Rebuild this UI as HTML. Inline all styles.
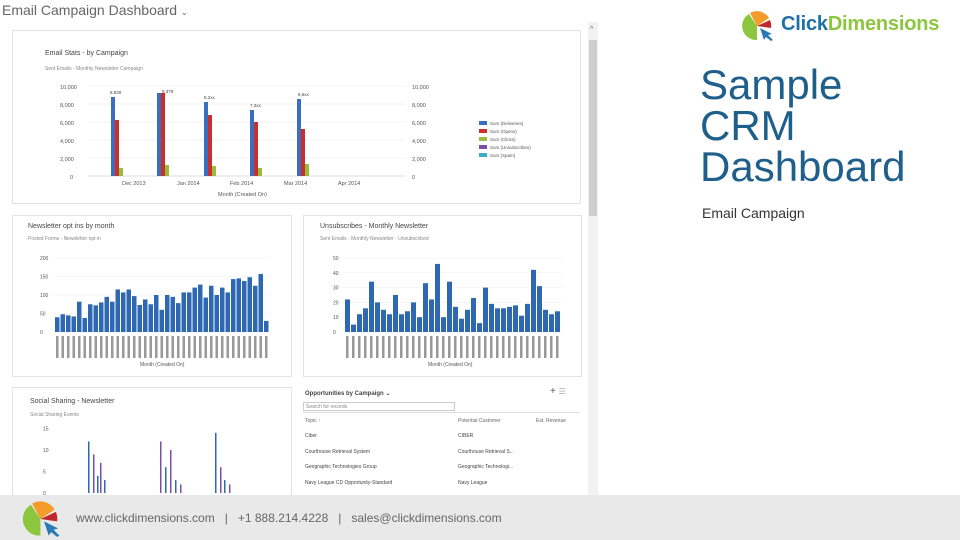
<!DOCTYPE html>
<html><head><meta charset="utf-8"><style>
body{margin:0;width:960px;height:540px;background:#fff;position:relative;overflow:hidden;font-family:"Liberation Sans",sans-serif}
.a{position:absolute}
.p{position:absolute;border:1px solid #e3e3e3;background:#fff}
.t{font-size:7px;color:#444}
.s{font-size:5px;color:#888}
</style></head><body>
<div class="a" style="left:2px;top:2px;font-size:14px;color:#666">Email Campaign Dashboard <span style="font-size:8px">⌄</span></div>
<div class="a" style="left:588px;top:22px;width:10px;height:473px;background:#f2f2f2"></div>
<div class="a" style="left:589px;top:40px;width:8px;height:176px;background:#cfcfcf"></div>
<div class="a" style="left:590px;top:26px;font-size:7px;color:#666">^</div>

<div class="p" style="left:12px;top:30px;width:567px;height:172px"></div>
<div class="a t" style="left:45px;top:50px">Email Stats - by Campaign</div>
<div class="a s" style="left:45px;top:66px">Sent Emails - Monthly Newsletter Campaign</div>
<svg class="a" style="left:0;top:0" width="600" height="540">
<g font-size="5.5" fill="#555" font-family="Liberation Sans">
<text x="60" y="89">10,000</text><text x="60" y="107">8,000</text><text x="60" y="125">6,000</text><text x="60" y="143">4,000</text><text x="60" y="161">2,000</text><text x="70" y="179">0</text>
<text x="412" y="89">10,000</text><text x="412" y="107">8,000</text><text x="412" y="125">6,000</text><text x="412" y="143">4,000</text><text x="412" y="161">2,000</text><text x="412" y="179">0</text>
<text x="122" y="185">Dec 2013</text><text x="177" y="185">Jan 2014</text><text x="230" y="185">Feb 2014</text><text x="284" y="185">Mar 2014</text><text x="338" y="185">Apr 2014</text>
<text x="218" y="196">Month (Created On)</text>
</g>
<g stroke="#e6e6e6" stroke-width="0.5"><line x1="88" y1="86" x2="405" y2="86"/><line x1="88" y1="104" x2="405" y2="104"/><line x1="88" y1="122" x2="405" y2="122"/><line x1="88" y1="140" x2="405" y2="140"/><line x1="88" y1="158" x2="405" y2="158"/></g>
<line x1="88" y1="176" x2="405" y2="176" stroke="#bbb" stroke-width="0.6"/>
<g fill="#3a6fbf"><rect x="111" y="97" width="4" height="79"/><rect x="157" y="93" width="4" height="83"/><rect x="204" y="102" width="4" height="74"/><rect x="250" y="110" width="4" height="66"/><rect x="297" y="99" width="4" height="77"/></g>
<g fill="#c9302c"><rect x="115" y="120" width="4" height="56"/><rect x="161" y="93" width="4" height="83"/><rect x="208" y="115" width="4" height="61"/><rect x="254" y="122" width="4" height="54"/><rect x="301" y="129" width="4" height="47"/></g>
<g fill="#9bbb3b"><rect x="119" y="168" width="4" height="8"/><rect x="165" y="165" width="4" height="11"/><rect x="212" y="166" width="4" height="10"/><rect x="258" y="168" width="4" height="8"/><rect x="305" y="164" width="4" height="12"/></g>
<g font-size="4.5" fill="#444"><text x="110" y="94">8,830</text><text x="162" y="93">9,379</text><text x="204" y="99">8,2xx</text><text x="250" y="107">7,3xx</text><text x="298" y="96">8,6xx</text></g>
<g fill="#3a6fbf"><rect x="479" y="121" width="8" height="4"/></g><rect x="479" y="129" width="8" height="4" fill="#c9302c"/><rect x="479" y="137" width="8" height="4" fill="#9bbb3b"/><rect x="479" y="145" width="8" height="4" fill="#7b4fa8"/><rect x="479" y="153" width="8" height="4" fill="#3aaccc"/>
<g font-size="4.5" fill="#555"><text x="490" y="125">Sum (Deliveries)</text><text x="490" y="133">Sum (Opens)</text><text x="490" y="141">Sum (Clicks)</text><text x="490" y="149">Sum (Unsubscribes)</text><text x="490" y="157">Sum (Spam)</text></g>
</svg>

<div class="p" style="left:12px;top:215px;width:278px;height:160px"></div>
<div class="a t" style="left:28px;top:223px">Newsletter opt ins by month</div>
<div class="a s" style="left:28px;top:236px">Posted Forms - Newsletter opt in</div>
<div class="p" style="left:303px;top:215px;width:277px;height:160px"></div>
<div class="a t" style="left:320px;top:223px">Unsubscribes - Monthly Newsletter</div>
<div class="a s" style="left:320px;top:236px">Sent Emails - Monthly Newsletter - Unsubscribed</div>
<div class="p" style="left:12px;top:387px;width:278px;height:120px"></div>
<div class="a t" style="left:30px;top:398px">Social Sharing - Newsletter</div>
<div class="a s" style="left:30px;top:412px">Social Sharing Events</div>
<div class="a t" style="left:305px;top:390px;font-weight:bold;font-size:6px">Opportunities by Campaign ⌄</div>
<div class="a" style="left:550px;top:386px;font-size:10px;color:#555">+ <span style="font-size:8px;color:#aaa">☰</span></div>
<div class="a" style="left:303px;top:402px;width:152px;height:9px;border:1px solid #ccc;font-size:5px;color:#888;line-height:9px;padding-left:2px;box-sizing:border-box">Search for records</div>
<div class="a" style="left:303px;top:412px;width:277px;border-top:1px solid #ddd"></div>
<div class="a s" style="left:305px;top:418px;color:#666">Topic ↑</div><div class="a s" style="left:458px;top:418px;color:#666">Potential Customer</div><div class="a s" style="left:536px;top:418px;color:#666">Est. Revenue</div>
<div class="a s" style="left:305px;top:433px;color:#444">Ciber</div><div class="a s" style="left:458px;top:433px;color:#444">CIBER</div>
<div class="a s" style="left:305px;top:449px;color:#444">Courthouse Retrieval System</div><div class="a s" style="left:458px;top:449px;color:#444">Courthouse Retrieval S...</div>
<div class="a s" style="left:305px;top:464px;color:#444">Geographic Technologies Group</div><div class="a s" style="left:458px;top:464px;color:#444">Geographic Technologi...</div>
<div class="a s" style="left:305px;top:480px;color:#444">Navy League CD Opportunity-Standard</div><div class="a s" style="left:458px;top:480px;color:#444">Navy League</div>

<svg class="a" style="left:0;top:0" width="600" height="540" id="c2"></svg>

<div class="a" style="left:700px;top:64px;font-size:42px;line-height:41px;color:#1f5f8b">Sample<br>CRM<br>Dashboard</div>
<div class="a" style="left:702px;top:205px;font-size:14px;color:#333">Email Campaign</div>

<svg class="a" style="left:740px;top:10px" width="40" height="32" viewBox="0 0 40 32">
<path d="M17 16 L9 4 A14 14 0 0 0 17 30 Z" fill="#8cc63f"/>
<path d="M17 16 L10 3 A14 14 0 0 1 29 8 Z" fill="#f39c2a"/>
<path d="M17 16 L30 10 A14 14 0 0 1 31 18 Z" fill="#c0282d"/>
<path d="M20 18 L32 24 L28 25 L33 30 L31 31 L26 27 L24 30 Z" fill="#2a7ab8"/>
</svg>
<div class="a" style="left:781px;top:13px;font-size:20px;font-weight:bold;letter-spacing:-0.2px"><span style="color:#1f6fa8">Click</span><span style="color:#8cc63f">Dimensions</span></div>

<div class="a" style="left:0;top:495px;width:960px;height:45px;background:#e9e9e9"></div>
<svg class="a" style="left:20px;top:500px" width="48" height="38" viewBox="0 0 40 32">
<path d="M17 16 L9 4 A14 14 0 0 0 17 30 Z" fill="#8cc63f"/>
<path d="M17 16 L10 3 A14 14 0 0 1 29 8 Z" fill="#f39c2a"/>
<path d="M17 16 L30 10 A14 14 0 0 1 31 18 Z" fill="#c0282d"/>
<path d="M20 18 L32 24 L28 25 L33 30 L31 31 L26 27 L24 30 Z" fill="#2a7ab8"/>
</svg>
<div class="a" style="left:76px;top:511px;font-size:12px;color:#666;white-space:pre">www.clickdimensions.com   |   +1 888.214.4228   |   sales@clickdimensions.com</div>

<script>
var s=document.getElementById('c2'),h='';
function r(x,y,w,hh,c){h+='<rect x="'+x+'" y="'+y+'" width="'+w+'" height="'+hh+'" fill="'+c+'"/>';}
function t(x,y,v,sz){h+='<text x="'+x+'" y="'+y+'" font-size="'+(sz||5)+'" fill="#555" font-family="Liberation Sans">'+v+'</text>';}
var a=[40,48,45,42,82,38,75,72,80,95,82,115,107,115,97,73,88,75,100,60,100,95,78,107,107,120,128,93,125,100,120,107,143,145,138,148,125,157,30];
var y0=332,sc=74/200;
[0,50,100,150,200].forEach(function(v){h+='<line x1="53" x2="270" y1="'+(y0-v*sc)+'" y2="'+(y0-v*sc)+'" stroke="#eee" stroke-width="0.5"/>';t(40,y0-v*sc+2,v);});
a.forEach(function(v,i){var x=55+i*5.5;r(x,y0-v*sc,4.5,v*sc,'#2e68b3');r(x+1,y0+4,2.5,22,'#999');});
t(140,366,'Month (Created On)');
var b=[22,5,12,16,34,20,15,12,25,12,14,20,10,33,22,46,10,34,17,9,15,23,6,30,19,16,16,17,18,11,19,42,31,15,12,14];
sc=74/50;
[0,10,20,30,40,50].forEach(function(v){h+='<line x1="343" x2="563" y1="'+(y0-v*sc)+'" y2="'+(y0-v*sc)+'" stroke="#eee" stroke-width="0.5"/>';t(333,y0-v*sc+2,v);});
b.forEach(function(v,i){var x=345+i*6;r(x,y0-v*sc,5,v*sc,'#2e68b3');r(x+1,y0+4,2.5,22,'#999');});
t(428,366,'Month (Created On)');
[[88,12],[93,9],[97,4],[100,7],[104,3],[160,12],[165,6],[170,10],[175,3],[180,2],[215,14],[220,6],[224,3],[229,2]].forEach(function(p,i){var sc2=4.3;r(p[0],493-p[1]*sc2,1.5,p[1]*sc2,i%2?'#7b4fa8':'#2e68b3');});
[0,5,10,15].forEach(function(v){t(43,493-v*4.3+2,v);});
s.innerHTML=h;
</script>
</body></html>
